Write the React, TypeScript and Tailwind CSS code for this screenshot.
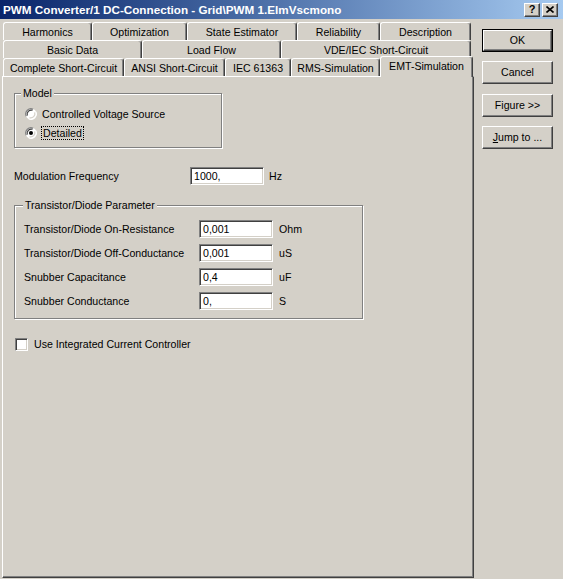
const raised =
  "border border-t-white border-l-white border-r-[#404040] border-b-[#404040] shadow-[inset_-1px_-1px_0_#808080]";
const sunken =
  "border border-t-[#808080] border-l-[#808080] border-r-white border-b-white shadow-[inset_1px_1px_0_#404040,inset_-1px_-1px_0_#d4d0c8]";
const etched = "border border-[#808080] shadow-[1px_1px_0_white,inset_1px_1px_0_white]";

const rows = [
  [
    ["Harmonics", 89],
    ["Optimization", 95],
    ["State Estimator", 110],
    ["Reliability", 83],
    ["Description", 91],
  ],
  [
    ["Basic Data", 139],
    ["Load Flow", 139],
    ["VDE/IEC Short-Circuit", 190],
  ],
  [
    ["Complete Short-Circuit", 121],
    ["ANSI Short-Circuit", 101],
    ["IEC 61363", 66],
    ["RMS-Simulation", 89],
  ],
] as const;

function Tab({ label, w }: { label: string; w: number }) {
  return (
    <div
      style={{ width: w }}
      className="h-[18px] shrink-0 flex items-center justify-center pt-[1px] rounded-t-[3px] border-l border-t border-r border-l-white border-t-white border-r-[#404040] shadow-[inset_-1px_0_0_#808080]"
    >
      {label}
    </div>
  );
}

function Radio({ checked }: { checked?: boolean }) {
  return (
    <svg width="12" height="12" viewBox="0 0 12 12" className="shrink-0">
      <circle cx="6" cy="6" r="5.5" fill="#fff" />
      <path d="M1.2 8.2 A5.3 5.3 0 0 1 8.2 1.2" stroke="#808080" strokeWidth="1.2" fill="none" />
      <path d="M2.3 7.6 A4.2 4.2 0 0 1 7.6 2.3" stroke="#404040" strokeWidth="1.2" fill="none" />
      <path d="M10.8 3.8 A5.3 5.3 0 0 1 3.8 10.8" stroke="#fff" strokeWidth="1.2" fill="none" />
      <path d="M9.7 4.4 A4.2 4.2 0 0 1 4.4 9.7" stroke="#d4d0c8" strokeWidth="1.2" fill="none" />
      {checked && <circle cx="6" cy="6" r="2" fill="#000" />}
    </svg>
  );
}

function Field({ value }: { value: string }) {
  return (
    <div className={`w-[74px] h-[18px] bg-white pl-[3px] flex items-center ${sunken}`}>{value}</div>
  );
}

function Button({ children, def }: { children: React.ReactNode; def?: boolean }) {
  return (
    <div className={def ? "border border-black" : ""}>
      <div
        className={`flex items-center justify-center ${def ? "h-[21px]" : "w-[71px] h-[23px]"} ${raised}`}
      >
        {children}
      </div>
    </div>
  );
}

export default function App() {
  const params = [
    ["Transistor/Diode On-Resistance", "0,001", "Ohm"],
    ["Transistor/Diode Off-Conductance", "0,001", "uS"],
    ["Snubber Capacitance", "0,4", "uF"],
    ["Snubber Conductance", "0,", "S"],
  ];
  return (
    <div className="w-[563px] h-[579px] bg-[#d4d0c8] overflow-hidden text-[10.6px] text-black font-['Liberation_Sans',Arial,sans-serif] leading-none select-none">
      {/* title bar */}
      <div className="h-[19px] flex items-center justify-between pl-[3px] pr-[5px] bg-gradient-to-r from-[#0a246a] to-[#a6caf0]">
        <span className="text-white font-bold text-[11.7px]">PWM Converter/1 DC-Connection - Grid\PWM 1.ElmVscmono</span>
        <div className="flex gap-[2px]">
          <div className={`w-[16px] h-[14px] bg-[#d4d0c8] flex items-center justify-center font-bold text-[11px] ${raised}`}>?</div>
          <div className={`w-[16px] h-[14px] bg-[#d4d0c8] flex items-center justify-center ${raised}`}>
            <svg width="8" height="7" viewBox="0 0 8 7">
              <path d="M0.5 0.5 L7.5 6.5 M7.5 0.5 L0.5 6.5" stroke="#000" strokeWidth="1.6" />
            </svg>
          </div>
        </div>
      </div>

      <div className="flex">
        {/* tabs + page */}
        <div className="w-[474px] pl-[2px] pt-[3px]">
          <div className="ml-[1px]">
            {rows.slice(0, 2).map((r, i) => (
              <div key={i} className="flex">
                {r.map(([l, w]) => (
                  <Tab key={l} label={l} w={w} />
                ))}
              </div>
            ))}
            <div className="flex items-end">
              {rows[2].map(([l, w]) => (
                <Tab key={l} label={l} w={w} />
              ))}
              <div className="relative z-10 w-[93px] h-[21px] -mt-[2px] -mb-[1px] bg-[#d4d0c8] flex items-center justify-center rounded-t-[3px] border-l border-t border-r border-l-white border-t-white border-r-[#404040] shadow-[inset_-1px_0_0_#808080] pb-[2px]">
                EMT-Simulation
              </div>
            </div>
          </div>

          <div className={`h-[502px] w-[472px] pl-[11px] pt-[16px] ${raised}`}>
            {/* Model group */}
            <div className={`relative w-[208px] h-[55px] ${etched}`}>
              <span className="absolute -top-[6px] left-[6px] px-[2px] bg-[#d4d0c8]">Model</span>
              <div className="pl-[10px] pt-[14px] flex flex-col gap-[7px]">
                <div className="flex items-center gap-[5px] h-[12px]">
                  <Radio />
                  <span>Controlled Voltage Source</span>
                </div>
                <div className="flex items-center gap-[4px] h-[12px]">
                  <Radio checked />
                  <span className="border border-dotted border-black px-[1px] py-[1px]">Detailed</span>
                </div>
              </div>
            </div>

            <div className="mt-[19px] flex items-center">
              <span className="w-[176px]">Modulation Frequency</span>
              <Field value="1000," />
              <span className="ml-[5px]">Hz</span>
            </div>

            {/* Transistor/Diode group */}
            <div className={`relative mt-[20px] w-[349px] h-[114px] ${etched}`}>
              <span className="absolute -top-[6px] left-[8px] px-[2px] bg-[#d4d0c8]">Transistor/Diode Parameter</span>
              <div className="pl-[9px] pt-[14px] flex flex-col gap-[6px]">
                {params.map(([l, v, u]) => (
                  <div key={l} className="flex items-center">
                    <span className="w-[175px]">{l}</span>
                    <Field value={v} />
                    <span className="ml-[6px]">{u}</span>
                  </div>
                ))}
              </div>
            </div>

            <div className="mt-[19px] ml-[1px] flex items-center gap-[6px]">
              <div className={`w-[13px] h-[13px] bg-white ${sunken}`} />
              <span>Use Integrated Current Controller</span>
            </div>
          </div>
        </div>

        {/* buttons */}
        <div className="ml-[8px] pt-[10px] w-[71px] flex flex-col">
          <Button def>OK</Button>
          <div className="mt-[9px]">
            <Button>Cancel</Button>
          </div>
          <div className="mt-[10px]">
            <Button>Figure &gt;&gt;</Button>
          </div>
          <div className="mt-[9px]">
            <Button>
              <span>
                <span className="underline">J</span>ump to ...
              </span>
            </Button>
          </div>
        </div>
      </div>
    </div>
  );
}
